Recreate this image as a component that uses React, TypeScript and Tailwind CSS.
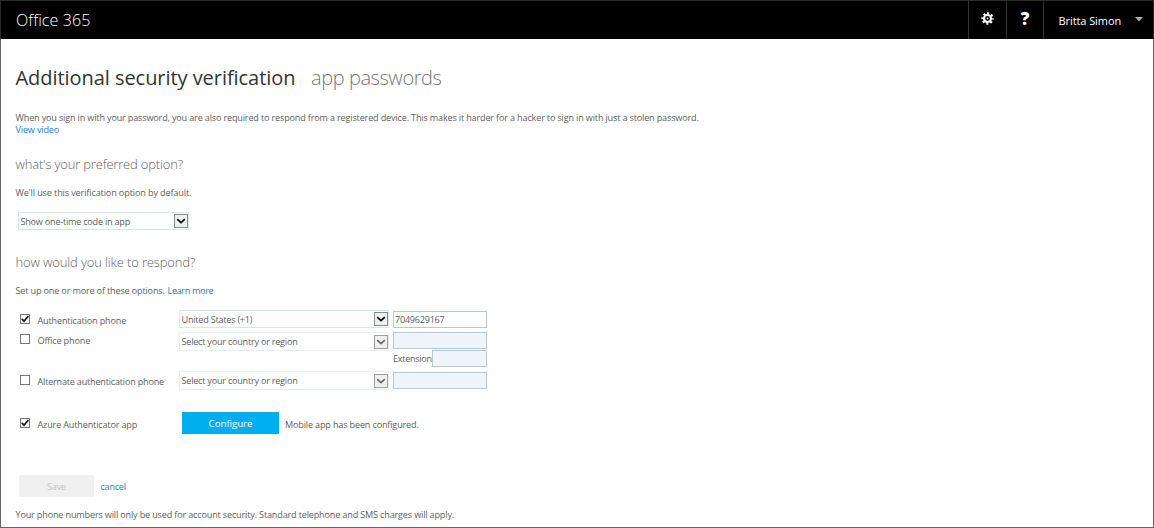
import React from "react";

function Arrow({ muted = false }: { muted?: boolean }) {
  return (
    <span className={`flex h-[14px] w-[14px] shrink-0 items-center justify-center border bg-[#efefef] ${muted ? "border-[#a0a0a0]" : "border-[#8a8a8a]"}`}>
      <svg width="10" height="8" viewBox="0 0 10 8" fill="none" className={muted ? "text-[#666]" : "text-black"}>
        <path d="M1.2 2.2 L5 5.6 L8.8 2.2" stroke="currentColor" strokeWidth="1.7" />
      </svg>
    </span>
  );
}

function Select({ text, className, muted = false }: { text: string; className: string; muted?: boolean }) {
  return (
    <div className={`flex items-center justify-between border bg-white pl-[1.5px] ${muted ? "border-[#e6eeef]" : "border-[#d3e6f4]"} ${className}`}>
      <span className="pt-px tracking-[-0.23px]">{text}</span>
      <Arrow muted={muted} />
    </div>
  );
}

function Check({ on = false }: { on?: boolean }) {
  return (
    <span className="flex h-[10px] w-[10px] shrink-0 items-center justify-center border border-[#777] bg-white">
      {on && (
        <svg width="8" height="8" viewBox="0 0 8 8" fill="none" className="shrink-0">
          <path d="M0.8 3.8 L3 6.2 L7.3 1" stroke="#111" strokeWidth="1.7" />
        </svg>
      )}
    </span>
  );
}

export default function App() {
  return (
    <div className="flex h-[528px] w-[1154px] flex-col overflow-hidden whitespace-nowrap bg-white font-['Open_Sans','Noto_Sans',sans-serif] text-[9.1px] tracking-[-0.17px] text-[#5f5f5f]">
      <header className="flex h-[39px] shrink-0 border-x border-t border-[#2b2b2b] bg-black text-white">
        <div className="flex-1 pl-[15px] text-[16px] font-light leading-[38px] tracking-[0.1px]">Office 365</div>
        <div className="flex w-[38px] justify-center border-l border-[#333] pt-[11px]">
          <svg width="13" height="13" viewBox="0 0 13 13" fill="none" stroke="white">
            <circle cx="6.5" cy="6.5" r="3.5" strokeWidth="2.1" />
            <circle cx="6.5" cy="6.5" r="5.2" strokeWidth="2" strokeDasharray="2.04 2.04" strokeDashoffset="1.02" />
            <circle cx="6.5" cy="6.5" r="0.9" fill="white" stroke="none" />
          </svg>
        </div>
        <div className="flex w-[37px] justify-center border-l border-[#333] pt-[10px]">
          <span className="text-[17px] font-extrabold leading-[16px]">?</span>
        </div>
        <div className="flex w-[110px] border-l border-[#333] pl-[14.5px]">
          <span className="w-[76.5px] text-[11px] leading-[39px] tracking-[-0.08px]">Britta Simon</span>
          <svg width="8" height="5" viewBox="0 0 8 5" className="mt-[16px]">
            <path d="M0 0 H8 L4 4.5 Z" fill="#aaa" />
          </svg>
        </div>
      </header>
      <main className="flex flex-1 flex-col border-x border-b border-[#666] pl-[14.5px]">
        <div className="mt-[20px] flex h-[36px] text-[20px] leading-[38px]">
          <h1 className="w-[295.5px] tracking-[-0.05px] text-[#333]">Additional security verification</h1>
          <span className="font-light tracking-[-0.42px] text-[#777]">app passwords</span>
        </div>
        <p className="mt-[17px] h-[12px] leading-[12px]">When you sign in with your password, you are also required to respond from a registered device. This makes it harder for a hacker to sign in with just a stolen password.</p>
        <a className="h-[12px] leading-[12px] text-[#1a80c4]">View video</a>
        <h2 className="mt-[16px] h-[24px] text-[13px] font-light leading-[24px] tracking-[-0.18px]">what's your preferred option?</h2>
        <p className="mt-[11px] h-[12px] leading-[12px] tracking-[-0.13px]">We'll use this verification option by default.</p>
        <Select text="Show one-time code in app" className="ml-[2.5px] mt-[13px] h-[18px] w-[171px]" />
        <h2 className="mt-[20px] h-[24px] text-[13px] font-light leading-[24px] tracking-[-0.14px]">how would you like to respond?</h2>
        <p className="mt-[10px] flex h-[12px] leading-[13px]">
          <span className="w-[152px]">Set up one or more of these options.</span>
          <a className="tracking-[-0.35px] text-[#1a80c4]">Learn more</a>
        </p>
        <div className="mt-[14px] flex h-[20px] items-start">
          <label className="flex w-[163.5px] pl-[4.5px] pt-[4px]"><Check on /><span className="pl-[7.5px] leading-[14px]">Authentication phone</span></label>
          <Select text="United States (+1)" className="h-[18px] w-[210px]" />
          <div className="ml-[4px] mt-px h-[17px] w-[94px] border border-[#b5c9dc] pl-px leading-[15px] tracking-[-0.25px]">7049629167</div>
        </div>
        <div className="flex h-[41px] items-start">
          <label className="flex w-[163.5px] pl-[4.5px] pt-[4px]"><Check /><span className="pl-[7.5px] leading-[14px]">Office phone</span></label>
          <Select muted text="Select your country or region" className="mt-[2px] h-[19px] w-[210px]" />
          <div className="ml-[4px] mt-[2px] flex w-[94px] flex-col">
            <div className="h-[17px] border border-[#b5c9dc] bg-[#f0f5fb]" />
            <div className="mt-px flex h-[17px] justify-between">
              <span className="w-[39px] leading-[18px] tracking-[-0.3px]">Extension</span>
              <div className="w-[55px] border border-[#b5c9dc] bg-[#f0f5fb]" />
            </div>
          </div>
        </div>
        <div className="flex h-[40px] items-start">
          <label className="flex w-[163.5px] pl-[4.5px] pt-[4px]"><Check /><span className="pl-[7.5px] leading-[14px] tracking-[-0.21px]">Alternate authentication phone</span></label>
          <Select muted text="Select your country or region" className="h-[19px] w-[210px]" />
          <div className="ml-[4px] mt-px h-[17px] w-[94px] border border-[#b5c9dc] bg-[#f0f5fb]" />
        </div>
        <div className="mt-px flex h-[22px] items-start">
          <label className="flex w-[166.5px] pl-[4.5px] pt-[6px]"><Check on /><span className="pl-[7.5px] leading-[14px]">Azure Authenticator app</span></label>
          <button className="h-[22px] w-[97px] bg-[#00adef] text-[9.8px] leading-[24px] tracking-[-0.1px] text-white">Configure</button>
          <span className="pl-[6px] leading-[25px]">Mobile app has been configured.</span>
        </div>
        <div className="mt-[41px] flex h-[22px]">
          <button className="ml-[3.5px] w-[75px] bg-[#f0f0f0] leading-[23px] text-[#c4c4c4]">Save</button>
          <a className="pl-[6.5px] leading-[24px] tracking-[-0.25px] text-[#1a80c4]">cancel</a>
        </div>
        <p className="mt-[12px] leading-[12px]">Your phone numbers will only be used for account security. Standard telephone and SMS charges will apply.</p>
      </main>
    </div>
  );
}
